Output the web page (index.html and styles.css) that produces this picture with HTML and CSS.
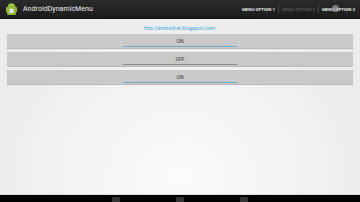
FILE: index.html
```html
<!DOCTYPE html>
<html lang="en">
<head>
    <meta charset="UTF-8">
    <meta name="viewport" content="width=device-width, initial-scale=1.0">
    <title>AndroidDynamicMenu</title>
    <link rel="stylesheet" href="styles.css">
</head>
<body>
    <div class="screen">
        <!-- action bar -->
        <div class="action-bar">
            <div class="app-icon">
                <svg width="11" height="12" viewBox="0 0 11 12">
                    <rect x="1" y="3" width="9" height="9" rx="1.5" fill="#8fb83a"/>
                    <path d="M2 3.2 A3.5 3 0 0 1 9 3.2 Z" fill="#9cc540"/>
                    <rect x="0" y="4" width="1" height="5" rx="0.5" fill="#8fb83a"/>
                    <rect x="10" y="4" width="1" height="5" rx="0.5" fill="#8fb83a"/>
                    <rect x="3.5" y="6" width="4" height="4" fill="#e8e8e8"/>
                    <rect x="4.5" y="5.5" width="2" height="1" fill="#e8e8e8"/>
                </svg>
            </div>
            <span class="title">AndroidDynamicMenu</span>
            <div class="menu">
                <span class="menu-item">MENU OPTION 1</span>
                <span class="sep"></span>
                <span class="menu-item disabled">MENU OPTION 2</span>
                <span class="sep"></span>
                <span class="menu-item pressed">MENU OPTION 3</span>
            </div>
        </div>

        <!-- content -->
        <div class="content">
            <a class="link" href="#">http://android-er.blogspot.com/</a>
            <div class="toggle on"><span>ON</span></div>
            <div class="toggle off"><span>OFF</span></div>
            <div class="toggle on"><span>ON</span></div>
        </div>

        <!-- navigation bar -->
        <div class="nav-bar">
            <span class="nav-btn"></span>
            <span class="nav-btn"></span>
            <span class="nav-btn"></span>
        </div>
    </div>
</body>
</html>
```

FILE: styles.css
```css
body {
    margin: 0;
    padding: 0;
    font-family: "Roboto", "Liberation Sans", sans-serif;
    background: #000;
}

.screen {
    width: 360px;
    height: 202px;
    display: flex;
    flex-direction: column;
    overflow: hidden;
}

.action-bar {
    height: 19px;
    flex: none;
    display: flex;
    align-items: center;
    background: linear-gradient(#2a2a2a, #1b1b1b);
    border-bottom: 1px solid #0e0e0e;
    box-sizing: border-box;
}

.app-icon {
    width: 11px;
    height: 12px;
    margin-left: 6px;
    display: flex;
}

.title {
    margin-left: 6px;
    color: #f2f2f2;
    font-size: 7px;
    letter-spacing: 0.05px;
}

.menu {
    margin-left: auto;
    display: flex;
    align-items: center;
    height: 100%;
    margin-right: 2px;
}

.menu-item {
    position: relative;
    color: #e8e8e8;
    font-size: 4.4px;
    font-weight: bold;
    padding: 0 3px;
}

.menu-item.disabled {
    color: #555;
}

.menu-item.pressed::after {
    content: "";
    position: absolute;
    left: 13px;
    top: -2px;
    width: 7px;
    height: 7px;
    border-radius: 50%;
    background: rgba(170, 170, 170, 0.7);
}

.sep {
    width: 1px;
    height: 7px;
    background: #444;
}

.content {
    flex: 1;
    display: flex;
    flex-direction: column;
    align-items: stretch;
    padding: 6px 7px 0 7px;
    background: radial-gradient(ellipse at 50% 90%, #fbfbfb, #ececec 80%);
}

.link {
    align-self: center;
    color: #3aa8d8;
    font-size: 5.2px;
    text-decoration: none;
    margin-bottom: 3px;
}

.toggle {
    height: 15px;
    margin-bottom: 3px;
    background: #c9c9c9;
    border-bottom: 1px solid #b8b8b8;
    box-sizing: border-box;
    display: flex;
    justify-content: center;
    align-items: center;
    position: relative;
}

.toggle span {
    font-size: 5px;
    color: #333;
    margin-top: -1px;
}

.toggle::after {
    content: "";
    position: absolute;
    left: 116px;
    right: 116px;
    bottom: 1px;
    height: 1.5px;
    background: #8a8a8a;
}

.toggle.on::after {
    background: #6fa8c8;
}

.nav-bar {
    height: 8px;
    flex: none;
    background: #000;
    border-top: 1px solid #dcdcdc;
    display: flex;
    justify-content: center;
    gap: 56px;
    padding-top: 2px;
    box-sizing: border-box;
}

.nav-btn {
    width: 8px;
    height: 5px;
    background: #333;
    border-radius: 1px 1px 0 0;
}
```
